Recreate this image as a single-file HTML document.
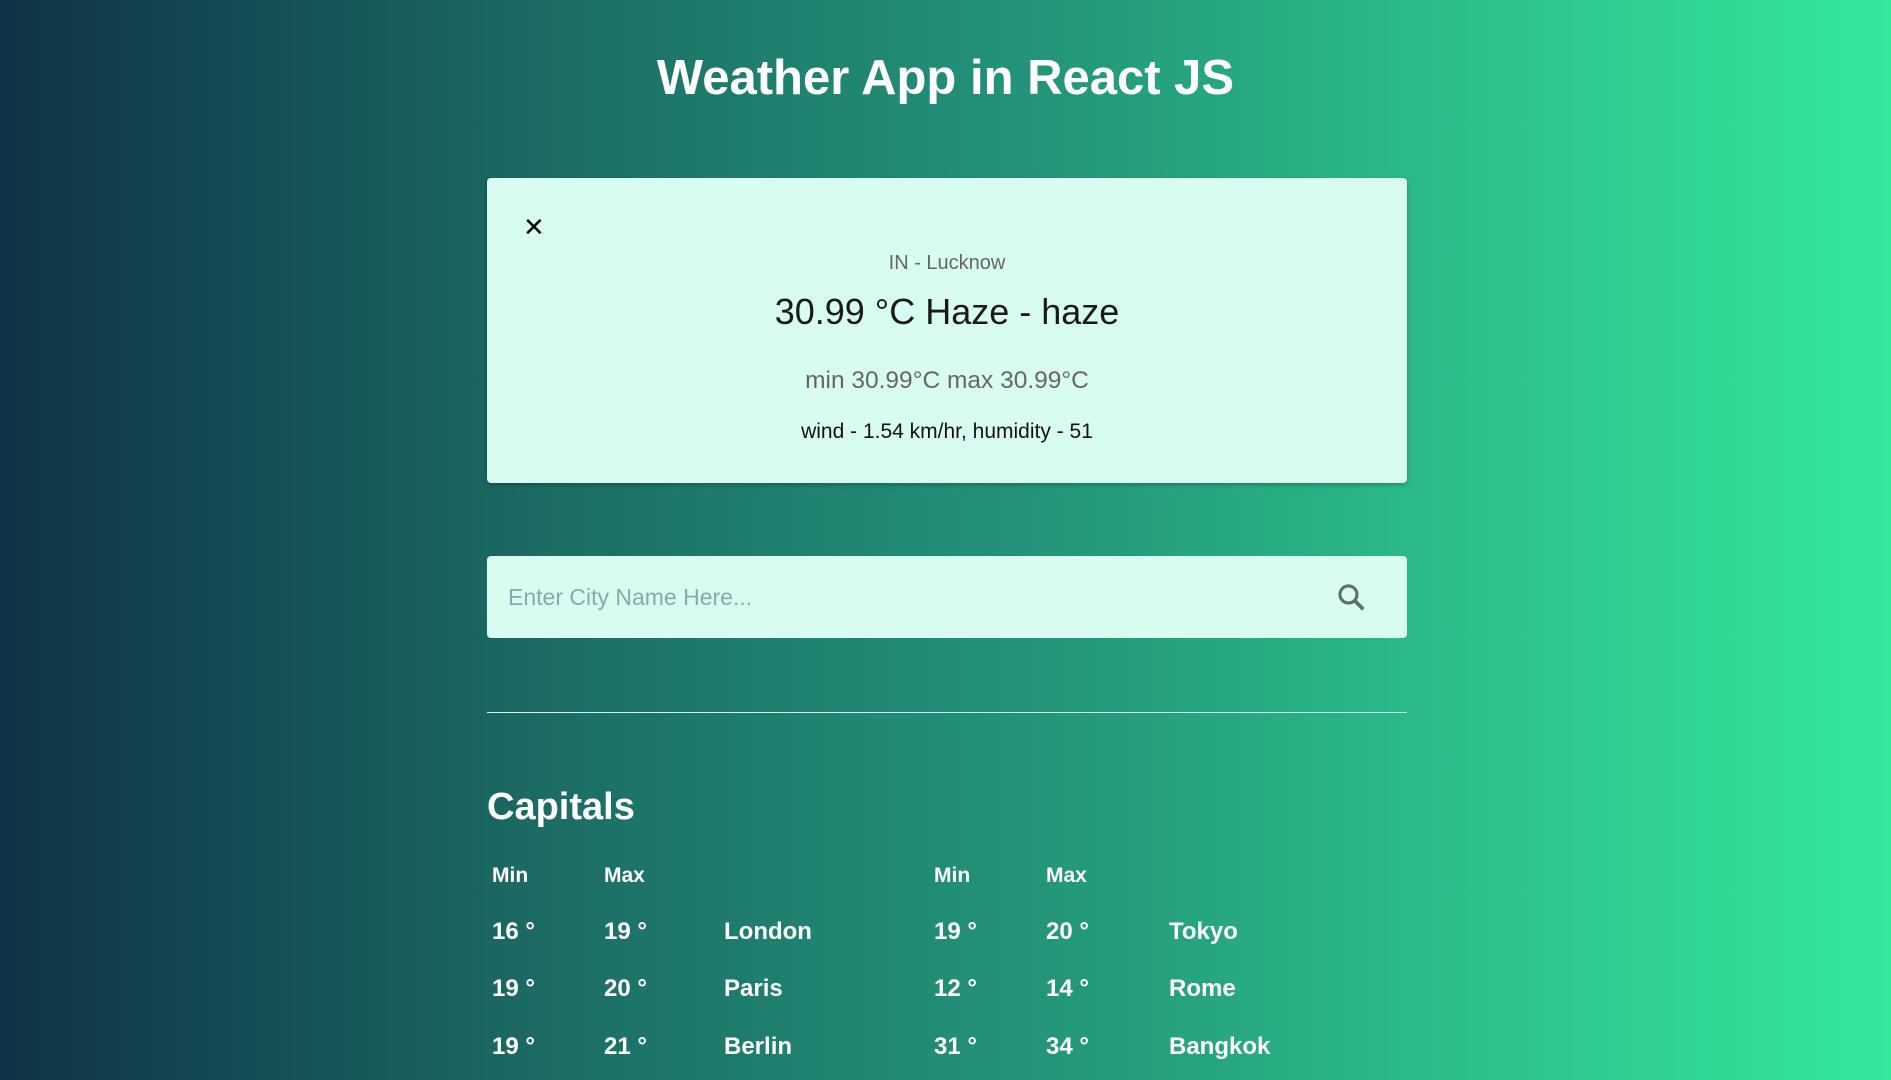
<!DOCTYPE html>
<html><head><meta charset="utf-8"><style>
*{margin:0;padding:0;box-sizing:border-box}
body{width:1891px;height:1080px;overflow:hidden;background:linear-gradient(90deg,#0f3346 0%,#1c6e65 30%,#23957a 55%,#2cc08a 78%,#34e89c 100%);font-family:"Liberation Sans",sans-serif;position:relative;color:#fff}
.a{position:absolute}
h1{position:absolute;left:0;width:1891px;text-align:center;top:50px;font-size:49px;font-weight:bold}
.card{left:487px;top:178px;width:920px;height:305px;background:#d8fdf0;border-radius:4px;box-shadow:0 2px 4px rgba(0,0,0,.25);color:#222}
.c{position:absolute;left:0;width:920px;text-align:center}
.search{left:487px;top:556px;width:920px;height:82px;background:#d8fdf0;border-radius:4px}
.line{left:487px;top:712px;width:920px;height:1px;background:#cfe}
.t{font-size:24px;font-weight:bold}
.h{font-size:21px;font-weight:bold}
</style></head><body>
<h1>Weather App in React JS</h1>
<div class="a card">
<div class="a" style="left:36px;top:34px;font-size:26px;color:#000">✕</div>
<div class="c" style="top:74px;font-size:20px;color:#666">IN - Lucknow</div>
<div class="c" style="top:113px;font-size:36px;color:#1a1a1a">30.99 °C Haze - haze</div>
<div class="c" style="top:189px;font-size:24.5px;color:#666">min 30.99°C max 30.99°C</div>
<div class="c" style="top:242px;font-size:21px;color:#111">wind - 1.54 km/hr, humidity - 51</div>
</div>
<div class="a search">
<div class="a" style="left:21px;top:28px;font-size:23px;color:#8aa">Enter City Name Here...</div>
<svg class="a" style="left:848px;top:25px" width="34" height="34" viewBox="0 0 24 24"><circle cx="9.5" cy="9.5" r="6" fill="none" stroke="#5f6f68" stroke-width="2.2"/><path d="M14 14L20 20" stroke="#5f6f68" stroke-width="2.6"/></svg>
</div>
<div class="a line"></div>
<div class="a" style="left:487px;top:786px;font-size:38px;font-weight:bold">Capitals</div>
<div class="a h" style="left:492px;top:864px">Min</div>
<div class="a h" style="left:604px;top:864px">Max</div>
<div class="a h" style="left:934px;top:864px">Min</div>
<div class="a h" style="left:1046px;top:864px">Max</div>
<div class="a t" style="left:492px;top:918px">16 °</div><div class="a t" style="left:604px;top:918px">19 °</div><div class="a t" style="left:724px;top:918px">London</div>
<div class="a t" style="left:934px;top:918px">19 °</div><div class="a t" style="left:1046px;top:918px">20 °</div><div class="a t" style="left:1169px;top:918px">Tokyo</div>
<div class="a t" style="left:492px;top:975px">19 °</div><div class="a t" style="left:604px;top:975px">20 °</div><div class="a t" style="left:724px;top:975px">Paris</div>
<div class="a t" style="left:934px;top:975px">12 °</div><div class="a t" style="left:1046px;top:975px">14 °</div><div class="a t" style="left:1169px;top:975px">Rome</div>
<div class="a t" style="left:492px;top:1033px">19 °</div><div class="a t" style="left:604px;top:1033px">21 °</div><div class="a t" style="left:724px;top:1033px">Berlin</div>
<div class="a t" style="left:934px;top:1033px">31 °</div><div class="a t" style="left:1046px;top:1033px">34 °</div><div class="a t" style="left:1169px;top:1033px">Bangkok</div>
</body></html>
